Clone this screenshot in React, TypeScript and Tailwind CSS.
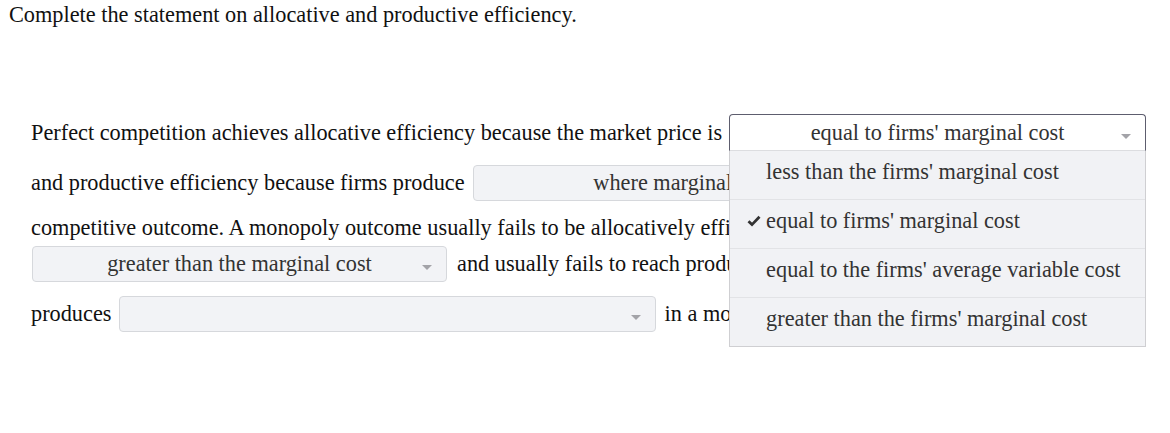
import React from "react";

const options = [
  "less than the firms' marginal cost",
  "equal to firms' marginal cost",
  "equal to the firms' average variable cost",
  "greater than the firms' marginal cost",
];

function Caret() {
  return (
    <svg width="10" height="6" viewBox="0 0 10 6" className="absolute right-[14px] top-1/2 mt-[1px]">
      <path d="M0 0 L10 0 L5 5 Z" fill="#a3a3a8" />
    </svg>
  );
}

function Select({ value, width, open }: { value?: string; width: string; open?: boolean }) {
  return (
    <div className={`relative shrink-0 ${width} ${open ? "h-[37px]" : "h-[36px]"}`}>
      <div
        className={
          open
            ? "relative h-full rounded-t-[4px] border border-[#5d5d6e] border-b-[#dcdde0] bg-white text-[#333] text-center leading-[35px] px-[18px]"
            : "relative h-full rounded-[4px] border border-[#d6d8dc] bg-[#f2f3f6] text-[#333] text-center leading-[34px] px-[18px]"
        }
      >
        <span className="whitespace-nowrap">{value}</span>
        <Caret />
      </div>
      {open && (
        <div className="absolute left-0 top-[37px] w-full z-10 border border-t-0 border-[#cfcfd2] bg-[#f1f2f5]">
          {options.map((opt, i) => (
            <div
              key={opt}
              className={`flex items-center pb-[6px] ${i < options.length - 1 ? "h-[49px] border-b border-[#e2e3e6]" : "h-[48px]"}`}
            >
              <div className="w-[36px] flex justify-end pr-[5px]">
                {opt === value && (
                  <svg width="14" height="12" viewBox="0 0 14 12">
                    <path d="M1.5 6.2 L5 9.6 L12.5 1.8" stroke="#333" strokeWidth="2.8" fill="none" />
                  </svg>
                )}
              </div>
              <span className="text-[#333] whitespace-nowrap">{opt}</span>
            </div>
          ))}
        </div>
      )}
    </div>
  );
}

export default function App() {
  return (
    <div
      className="w-[1170px] h-[433px] bg-white text-[#111] text-[22.3px] overflow-hidden"
      style={{ fontFamily: '"Liberation Serif", "Times New Roman", serif' }}
    >
      <div className="pl-[9px] pt-[1px] leading-[28px]">Complete the statement on allocative and productive efficiency.</div>

      <div className="mt-[85px] pl-[31px]">
        <div className="flex items-center h-[37px] whitespace-nowrap">
          <span>Perfect competition achieves allocative efficiency because the market price is</span>
          <div className="ml-[7px]">
            <Select value="equal to firms' marginal cost" width="w-[417px]" open />
          </div>
        </div>

        <div className="flex items-center w-[699px] h-[36px] mt-[14px] whitespace-nowrap overflow-hidden">
          <span>and productive efficiency because firms produce</span>
          <div className="ml-[8px]">
            <Select value="where marginal cost equals average total cost" width="w-[646px]" />
          </div>
        </div>

        <div className="flex items-center w-[699px] h-[36px] mt-[9px] whitespace-nowrap overflow-hidden">
          <span>competitive outcome. A monopoly outcome usually fails to be allocatively efficient because the price is</span>
        </div>

        <div className="flex items-center w-[699px] h-[36px] whitespace-nowrap overflow-hidden">
          <div className="ml-[1px]">
            <Select value="greater than the marginal cost" width="w-[415px]" />
          </div>
          <span className="ml-[10px]">and usually fails to reach productive efficiency because the monopolist</span>
        </div>

        <div className="flex items-center w-[699px] h-[36px] mt-[14px] whitespace-nowrap overflow-hidden">
          <span>produces</span>
          <div className="ml-[7px]">
            <Select value="" width="w-[537px]" />
          </div>
          <span className="ml-[9px]">in a monopoly outcome.</span>
        </div>
      </div>
    </div>
  );
}
